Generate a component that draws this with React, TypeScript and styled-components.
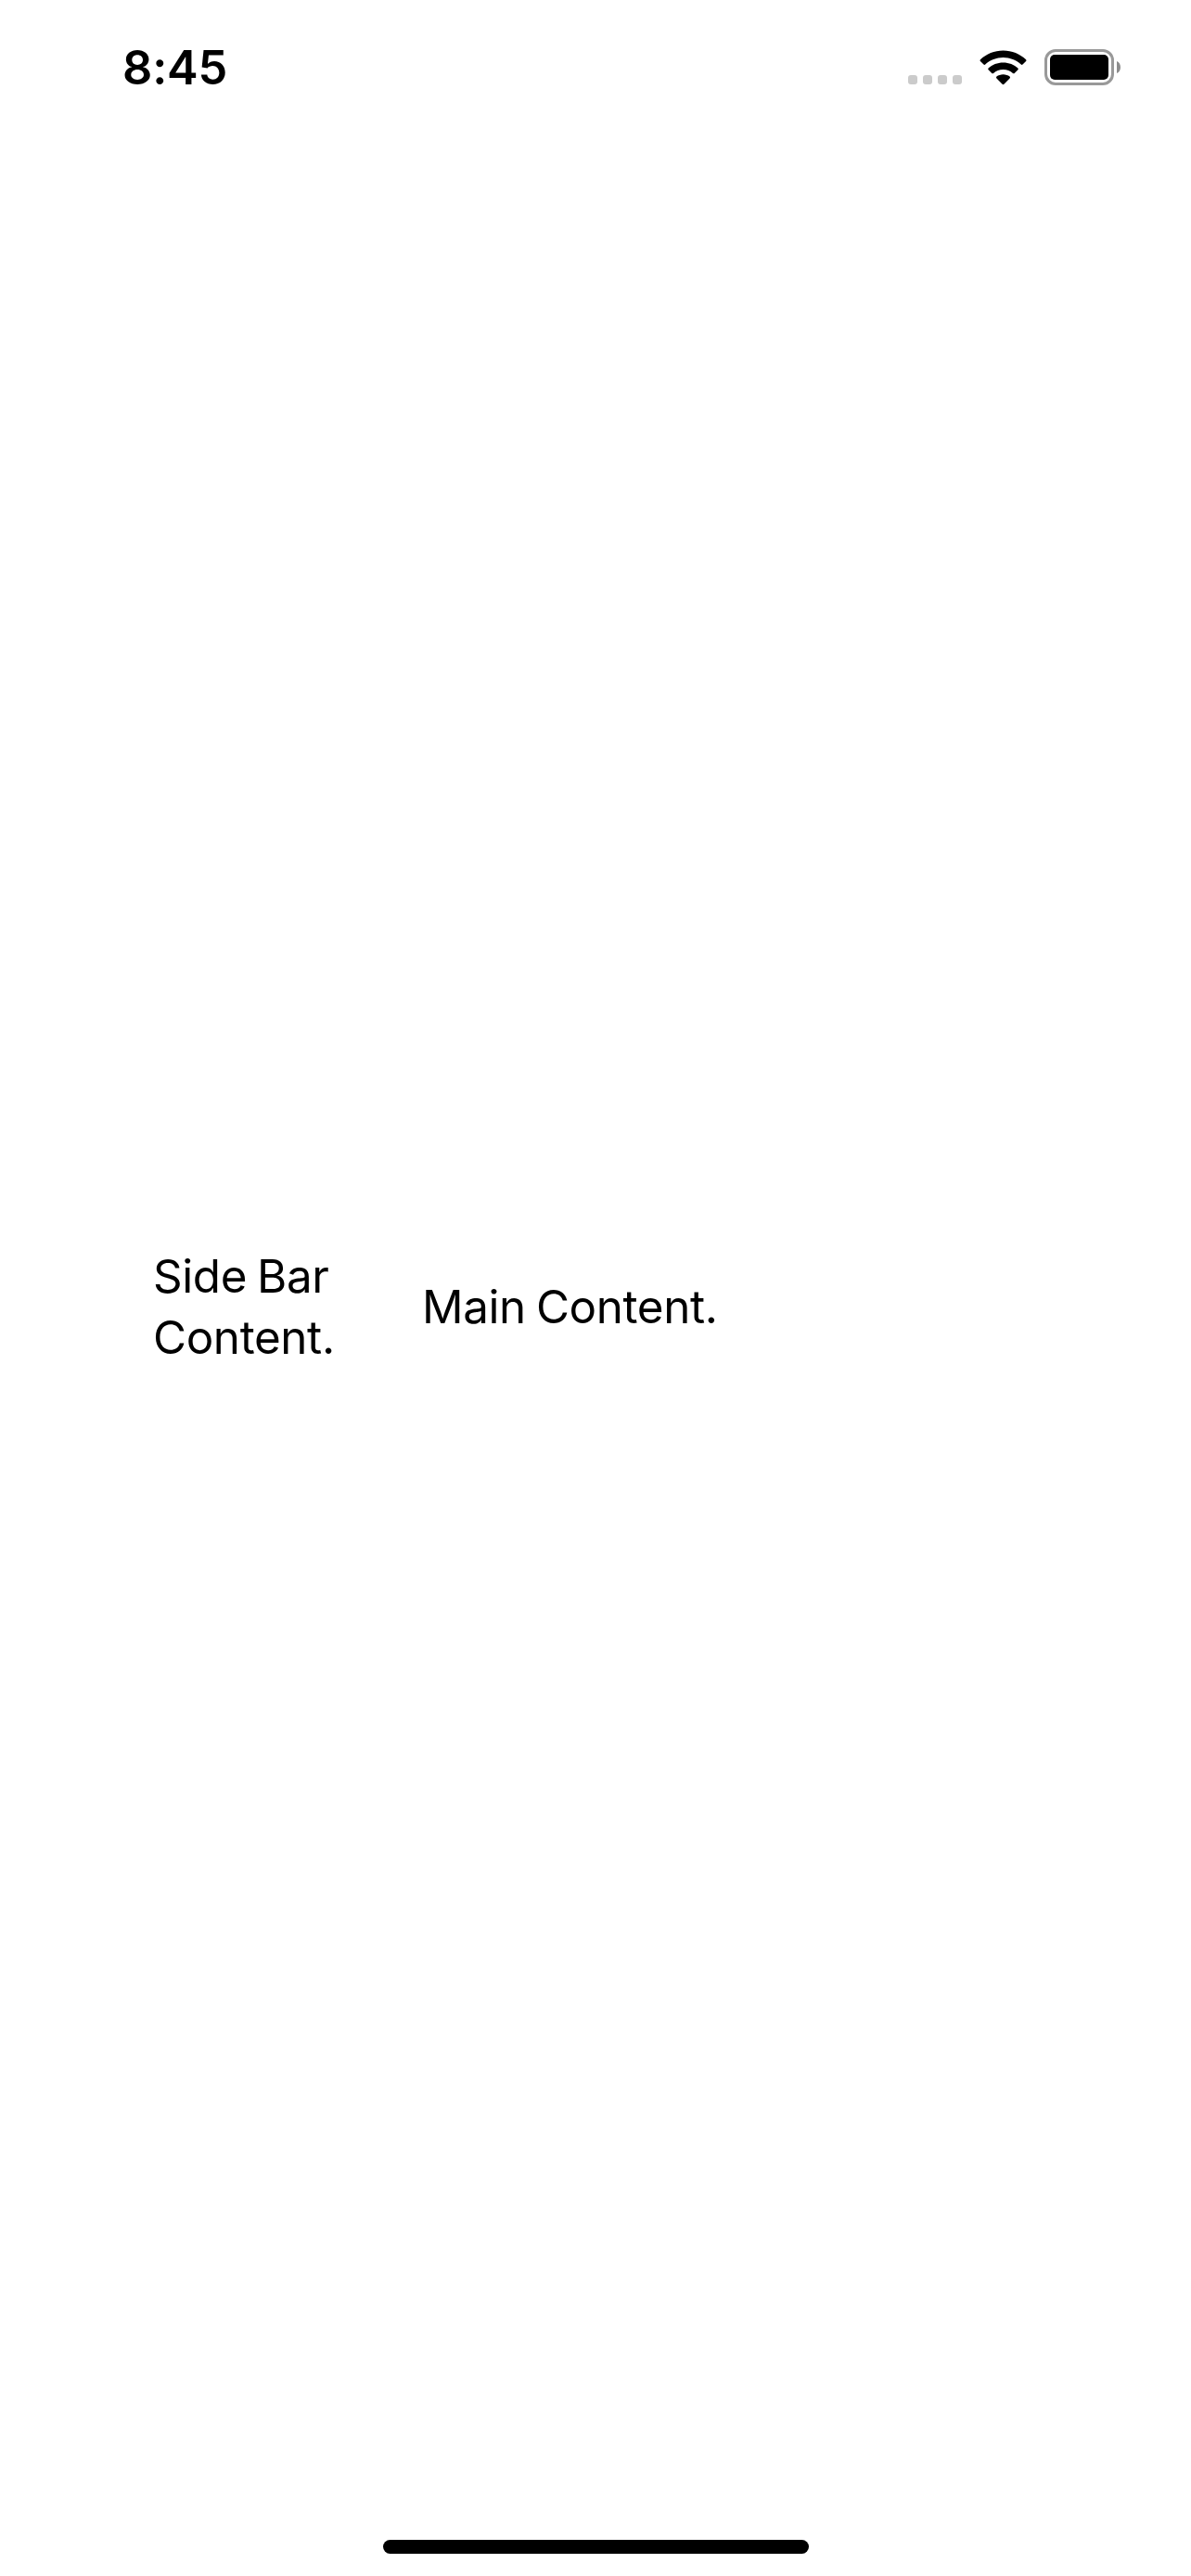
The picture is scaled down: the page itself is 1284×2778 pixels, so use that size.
import React from "react";
import styled, { createGlobalStyle } from "styled-components";

const GlobalStyle = createGlobalStyle`
  *, *::before, *::after { box-sizing: border-box; }
  body { margin: 0; background: #fff; }
`;

const Screen = styled.div`
  display: flex;
  flex-direction: column;
  width: 1284px;
  height: 2778px;
  background: #fff;
  color: #000;
  font-family: Inter, "Liberation Sans", sans-serif;
`;

const StatusBar = styled.header`
  display: flex;
  justify-content: space-between;
  height: 141px;
  padding: 53px 76px 0 132px;
`;

const Clock = styled.time`
  height: 40px;
  font-size: 50.5px;
  font-weight: 580;
  line-height: 40px;
  letter-spacing: -0.2px;
`;

const Indicators = styled.div`
  display: flex;
  align-items: center;
  height: 39px;
`;

const SignalDots = styled.div`
  display: flex;
  align-self: flex-end;
  gap: 6px;
  margin: 0 19px 1px 0;
`;

const Dot = styled.span`
  width: 10px;
  height: 10px;
  border-radius: 3px;
  background: #cbcbcb;
`;

const Wifi = styled.svg`
  width: 51px;
  height: 38px;
  margin-right: 19px;
`;

const Battery = styled.div`
  width: 75px;
  height: 39px;
  padding: 3px;
  border: 3px solid #999;
  border-radius: 12px;
`;

const Charge = styled.div`
  height: 100%;
  border-radius: 5px;
  background: #000;
`;

const Terminal = styled.svg`
  width: 4px;
  height: 13px;
  margin-left: 3px;
`;

const Content = styled.div`
  display: flex;
  flex: 1;
  align-items: center;
  padding-left: 165px;
`;

const BodyText = styled.p`
  margin: 0;
  font-size: 49.3px;
  font-weight: 400;
  line-height: 66px;
  letter-spacing: -0.35px;
  word-spacing: -2.5px;
`;

const Sidebar = styled.aside`
  width: 290px;
  padding-right: 80px;
`;

const Main = styled.main`
  flex: 1;
`;

const HomeArea = styled.footer`
  display: flex;
  justify-content: center;
  height: 102px;
  padding: 63px 0 0 1px;
`;

const HomeIndicator = styled.div`
  width: 459px;
  height: 15px;
  border-radius: 8px;
  background: #000;
`;

export default function App() {
  return (
    <Screen>
      <GlobalStyle />
      <StatusBar>
        <Clock>8:45</Clock>
        <Indicators>
          <SignalDots>
            {[0, 1, 2, 3].map((i) => (
              <Dot key={i} />
            ))}
          </SignalDots>
          <Wifi viewBox="0 0 51 38" aria-hidden="true">
            <path d="M25.5 0.500C35 0.500 43.600 4.200 50.100 10.200Q51 11.100 50.100 12L46.500 15.600Q45.700 16.400 44.800 15.600C39.600 10.900 32.800 8.100 25.500 8.100S11.400 10.900 6.200 15.600Q5.300 16.400 4.500 15.600L.9 12Q0 11.100.9 10.200C7.400 4.200 16 0.500 25.500 0.500Z" />
            <path d="M25.500 13.500C31.700 13.500 37.300 15.700 41.400 19.500Q42.300 20.400 41.400 21.300L37.700 25Q36.900 25.700 36 24.900C33.200 22.400 29.600 21 25.500 21S17.800 22.400 15 24.900Q14.100 25.700 13.300 25L9.600 21.300Q8.700 20.400 9.600 19.500C13.700 15.700 19.300 13.500 25.500 13.500Z" />
            <path d="M25.500 26.300C28.200 26.300 30.700 27.200 32.600 28.600Q33.500 29.500 32.600 30.400L26.400 36.800Q25.500 37.600 24.600 36.800L18.400 30.400Q17.500 29.500 18.400 28.600C20.300 27.200 22.800 26.300 25.500 26.300Z" />
          </Wifi>
          <Battery>
            <Charge />
          </Battery>
          <Terminal viewBox="0 0 4 13" aria-hidden="true">
            <path d="M0 0C5.300 2 5.300 11 0 13Z" fill="#8c8c8c" />
          </Terminal>
        </Indicators>
      </StatusBar>
      <Content>
        <Sidebar>
          <BodyText>Side Bar Content.</BodyText>
        </Sidebar>
        <Main>
          <BodyText>Main Content.</BodyText>
        </Main>
      </Content>
      <HomeArea>
        <HomeIndicator />
      </HomeArea>
    </Screen>
  );
}
